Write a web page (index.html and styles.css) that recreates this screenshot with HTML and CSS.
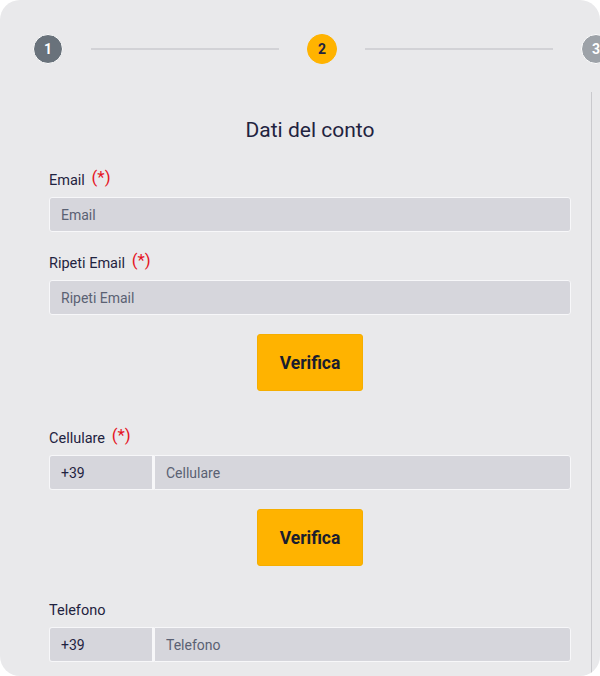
FILE: index.html
```html
<!DOCTYPE html>
<html lang="it">
<head>
    <meta charset="UTF-8">
    <meta name="viewport" content="width=device-width, initial-scale=1.0">
    <title>Dati del conto</title>
    <link rel="stylesheet" href="styles.css">
</head>
<body>
    <div class="card">
        <!-- Stepper -->
        <div class="stepper">
            <div class="step step-done">1</div>
            <div class="step-line"></div>
            <div class="step step-active">2</div>
            <div class="step-line"></div>
            <div class="step step-todo">3</div>
        </div>

        <!-- Form -->
        <div class="panel">
            <h2 class="panel-title">Dati del conto</h2>

            <div class="field">
                <label class="field-label">Email <span class="req">(*)</span></label>
                <input class="text-input" type="text" placeholder="Email">
            </div>

            <div class="field">
                <label class="field-label">Ripeti Email <span class="req">(*)</span></label>
                <input class="text-input" type="text" placeholder="Ripeti Email">
            </div>

            <button class="verify-btn">Verifica</button>

            <div class="field">
                <label class="field-label">Cellulare <span class="req">(*)</span></label>
                <div class="phone-group">
                    <input class="text-input prefix" type="text" value="+39">
                    <input class="text-input" type="text" placeholder="Cellulare">
                </div>
            </div>

            <button class="verify-btn">Verifica</button>

            <div class="field">
                <label class="field-label">Telefono</label>
                <div class="phone-group">
                    <input class="text-input prefix" type="text" value="+39">
                    <input class="text-input" type="text" placeholder="Telefono">
                </div>
            </div>
        </div>
    </div>
</body>
</html>
```

FILE: styles.css
```css
body {
    margin: 0;
    background-color: #ffffff;
    font-family: Roboto, "Liberation Sans", sans-serif;
    color: #1f2340;
}

.card {
    width: 600px;
    height: 676px;
    background: #e9e9eb;
    border-radius: 20px;
    overflow: hidden;
    box-sizing: border-box;
}

/* stepper */
.stepper {
    display: flex;
    align-items: flex-start;
    gap: 28px;
    padding: 34px 0 0 33px;
    height: 92px;
    box-sizing: border-box;
}

.step {
    flex: none;
    width: 30px;
    height: 30px;
    border-radius: 50%;
    border: 1px solid #ffffff;
    box-sizing: border-box;
    display: flex;
    align-items: center;
    justify-content: center;
    font-size: 14px;
    font-weight: 700;
}

.step-done {
    background: #69727b;
    color: #ffffff;
}

.step-active {
    background: #ffb300;
    border-color: #ffb300;
    color: #1f2340;
}

.step-todo {
    background: #9da2a8;
    color: #ffffff;
}

.step-line {
    flex: none;
    width: 188px;
    height: 2px;
    margin-top: 14px;
    background: #d2d2d6;
}

/* form panel */
.panel {
    width: 592px;
    height: 584px;
    border-right: 1px solid #c9c9cd;
    box-sizing: border-box;
    padding: 24px 20px 0 49px;
}

.panel-title {
    margin: 0 0 24px;
    text-align: center;
    font-size: 21px;
    font-weight: 400;
    line-height: 28px;
}

.field {
    margin-bottom: 19px;
}

.field-label {
    display: block;
    height: 22px;
    font-size: 14.5px;
    line-height: 25px;
    margin-bottom: 7px;
}

.req {
    position: relative;
    top: -2px;
    color: #e5141f;
    font-size: 17px;
    line-height: 1;
    margin-left: 3px;
}

.text-input {
    display: block;
    width: 100%;
    height: 35px;
    padding: 0 11px;
    border: 1px solid #f7f7f9;
    border-radius: 3px;
    background: #d6d6dc;
    font-family: inherit;
    font-size: 14px;
    color: #1f2340;
    box-sizing: border-box;
    outline: none;
}

.text-input::placeholder {
    color: #5a6173;
}

.phone-group {
    display: flex;
}

.phone-group .text-input {
    flex: 1;
    border-radius: 0 3px 3px 0;
}

.phone-group .prefix {
    flex: none;
    width: 105px;
    border-radius: 3px 0 0 3px;
    border-right: 2px solid #f7f7f9;
}

.verify-btn {
    display: block;
    width: 106px;
    height: 57px;
    margin: 0 auto 35px;
    border: 1px solid #f5ae00;
    border-radius: 3px;
    background: #ffb300;
    font-family: inherit;
    font-size: 17.5px;
    font-weight: 700;
    color: #1a1d2e;
    cursor: pointer;
}

.verify-btn + .field + .verify-btn {
    margin-bottom: 32px;
}
```
